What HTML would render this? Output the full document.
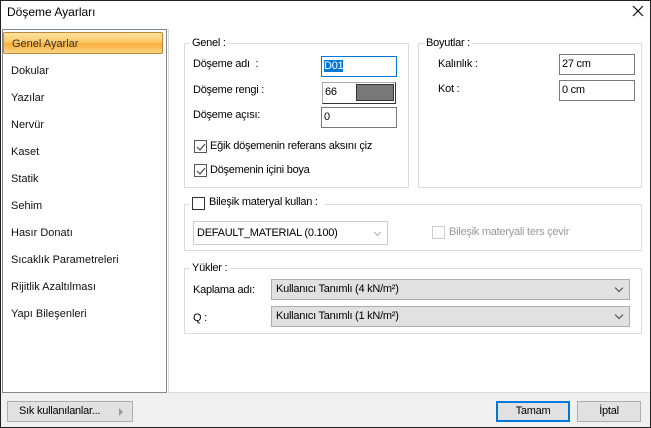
<!DOCTYPE html>
<html><head><meta charset="utf-8"><style>
*{margin:0;padding:0;box-sizing:border-box}
body{width:651px;height:428px;position:relative;background:#fff;font-family:"Liberation Sans",sans-serif;font-size:11px;color:#000;overflow:hidden;letter-spacing:-0.25px}
.a{position:absolute;white-space:nowrap}
.win{position:absolute;left:0;top:0;width:651px;height:428px;border:1px solid #222}
.list{position:absolute;left:2px;top:29px;width:165px;height:364px;border:1px solid #828790;background:#fff}
.item{position:absolute;left:9px;font-size:11px;letter-spacing:0;color:#111}
.sel{position:absolute;left:3px;top:32px;width:160px;height:22px;border:1px solid #c2883a;border-radius:2px;background:linear-gradient(#fde3a0,#fbc868 45%,#f8ae3a 55%,#fbd585);}
.grp{position:absolute;border:1px solid #dcdcdc}
.lbl{position:absolute;background:#fff;padding:0 2px}
.inp{position:absolute;border:1px solid #7a7a7a;background:#fff;padding-left:2px;line-height:18px;font-size:11px}
.cb{position:absolute;width:13px;height:13px;border:1px solid #333;background:#fff}
.combo{position:absolute;background:#e1e1e1;border:1px solid #adadad;padding-left:4px;line-height:18px}
.btn{position:absolute;background:#e1e1e1;border:1px solid #adadad;text-align:center;line-height:18px}
.chev{position:absolute;right:7px;top:5px;width:6px;height:6px;border-right:1px solid #444;border-bottom:1px solid #444;transform:rotate(45deg)}
</style></head><body>
<div class="win"></div>
<div class="a" style="left:7px;top:5px;font-size:12px;letter-spacing:0">Döşeme Ayarları</div>
<svg class="a" style="left:632px;top:5px" width="12" height="12"><path d="M1 1L11 11M11 1L1 11" stroke="#111" stroke-width="1.2"/></svg>
<div class="a" style="left:1px;top:393px;width:649px;height:34px;background:#f0f0f0"></div>
<div class="a" style="left:168px;top:29px;width:1px;height:364px;background:#ddd"></div>
<div class="a" style="left:169px;top:392px;width:481px;height:1px;background:#ddd"></div>
<div class="list"></div>
<div class="sel"></div>
<div class="item" style="top:38px;left:12px;color:#333">Genel Ayarlar</div>
<div class="item" style="top:65px;left:11px">Dokular</div>
<div class="item" style="top:92px;left:11px">Yazılar</div>
<div class="item" style="top:119px;left:11px">Nervür</div>
<div class="item" style="top:146px;left:11px">Kaset</div>
<div class="item" style="top:173px;left:11px">Statik</div>
<div class="item" style="top:200px;left:11px">Sehim</div>
<div class="item" style="top:227px;left:11px">Hasır Donatı</div>
<div class="item" style="top:254px;left:11px">Sıcaklık Parametreleri</div>
<div class="item" style="top:281px;left:11px">Rijitlik Azaltılması</div>
<div class="item" style="top:308px;left:11px">Yapı Bileşenleri</div>

<div class="grp" style="left:184px;top:43px;width:225px;height:145px"></div>
<div class="lbl" style="left:190px;top:37px">Genel :</div>
<div class="a" style="left:193px;top:58px">Döşeme adı&nbsp; :</div>
<div class="inp" style="left:321px;top:56px;width:76px;height:21px;border-color:#0078d7"><span style="background:#0078d7;color:#fff">D01</span></div>
<div class="a" style="left:193px;top:84px">Döşeme rengi :</div>
<div class="a" style="left:322px;top:82px;width:74px;height:22px;border:1px solid #333;border-left-color:#aaa;border-top-color:#aaa;background:#fff"></div>
<div class="a" style="left:325px;top:86px">66</div>
<div class="a" style="left:356px;top:84px;width:38px;height:17px;background:#787878;border:1px solid #333"></div>
<div class="a" style="left:193px;top:109px">Döşeme açısı:</div>
<div class="inp" style="left:321px;top:107px;width:76px;height:21px">0</div>
<div class="cb" style="left:194px;top:140px;border-color:#555"></div>
<svg class="a" style="left:196px;top:142px" width="10" height="10"><path d="M1 5L4 8L9 2" stroke="#333" fill="none"/></svg>
<div class="a" style="left:210px;top:140px">Eğik döşemenin referans aksını çiz</div>
<div class="cb" style="left:194px;top:164px;border-color:#555"></div>
<svg class="a" style="left:196px;top:166px" width="10" height="10"><path d="M1 5L4 8L9 2" stroke="#333" fill="none"/></svg>
<div class="a" style="left:210px;top:164px">Döşemenin içini boya</div>

<div class="grp" style="left:418px;top:43px;width:224px;height:145px"></div>
<div class="lbl" style="left:424px;top:37px">Boyutlar :</div>
<div class="a" style="left:438px;top:58px">Kalınlık :</div>
<div class="inp" style="left:559px;top:54px;width:76px;height:21px">27 cm</div>
<div class="a" style="left:438px;top:83px">Kot :</div>
<div class="inp" style="left:559px;top:80px;width:76px;height:21px">0 cm</div>

<div class="grp" style="left:184px;top:204px;width:458px;height:47px"></div>
<div class="lbl" style="left:189px;top:196px;width:136px;height:14px"></div>
<div class="cb" style="left:192px;top:197px"></div>
<div class="a" style="left:209px;top:196px">Bileşik materyal kullan :</div>
<div class="a" style="left:193px;top:221px;width:195px;height:24px;border:1px solid #ccc;background:#fff"></div>
<div class="a" style="left:197px;top:227px">DEFAULT_MATERIAL (0.100)</div>
<div class="a" style="left:375px;top:230px;width:5px;height:5px;border-right:1px solid #aaa;border-bottom:1px solid #aaa;transform:rotate(45deg)"></div>
<div class="cb" style="left:432px;top:226px;border-color:#ccc"></div>
<div class="a" style="left:449px;top:226px;color:#999">Bileşik materyali ters çevir</div>

<div class="grp" style="left:184px;top:268px;width:458px;height:66px"></div>
<div class="lbl" style="left:190px;top:262px">Yükler :</div>
<div class="a" style="left:193px;top:284px">Kaplama adı:</div>
<div class="combo" style="left:271px;top:279px;width:359px;height:21px">Kullanıcı Tanımlı (4 kN/m²)<div class="chev"></div></div>
<div class="a" style="left:193px;top:312px">Q :</div>
<div class="combo" style="left:271px;top:306px;width:359px;height:21px">Kullanıcı Tanımlı (1 kN/m²)<div class="chev"></div></div>

<div class="btn" style="left:7px;top:401px;width:126px;height:21px;text-align:left;padding-left:11px">Sık kullanılanlar...</div>
<div class="a" style="left:119px;top:408px;width:0;height:0;border-left:4px solid #999;border-top:4px solid transparent;border-bottom:4px solid transparent"></div>
<div class="btn" style="left:496px;top:401px;width:74px;height:21px;border:2px solid #0078d7;line-height:17px">Tamam</div>
<div class="btn" style="left:577px;top:401px;width:64px;height:21px">İptal</div>
</body></html>
